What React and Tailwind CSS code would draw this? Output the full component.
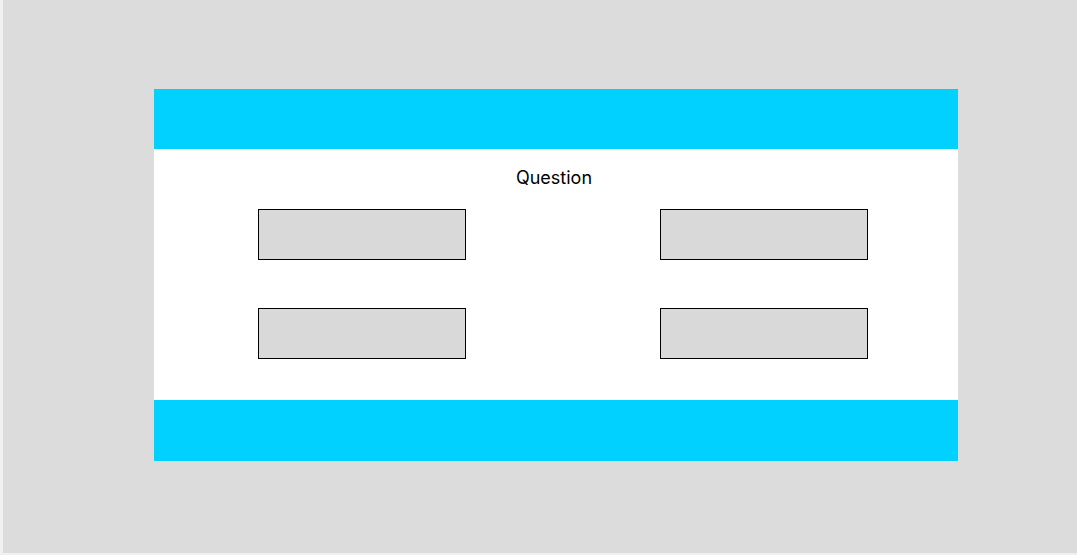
const Box = () => (
  <div className="w-[208px] h-[51px] bg-[#d9d9d9] border-[1.5px] border-black" />
);

const App = () => {
  return (
    <div className="w-[1077px] h-[555px] bg-[#f0f0f0] pl-[3px] pb-[2px]">
      <div className="h-full bg-[#dcdcdc] pt-[89px] pl-[151px]">
        <div className="w-[804px] flex flex-col">
          {/* top band */}
          <div className="h-[60px] bg-[#00d1ff]" />

          {/* body */}
          <div className="bg-white pt-[18px] pb-[41px] flex flex-col">
            <p className="text-center text-[18px] leading-[21px] text-black font-['Inter',sans-serif] -translate-x-[2px]">
              Question
            </p>
            <div className="mt-[21px] pl-[104px] pr-[90px] grid grid-cols-2 gap-y-[48px]">
              <div className="flex justify-start"><Box /></div>
              <div className="flex justify-end"><Box /></div>
              <div className="flex justify-start"><Box /></div>
              <div className="flex justify-end"><Box /></div>
            </div>
          </div>

          {/* bottom band */}
          <div className="h-[61px] bg-[#00d1ff]" />
        </div>
      </div>
    </div>
  );
};

export default App;
